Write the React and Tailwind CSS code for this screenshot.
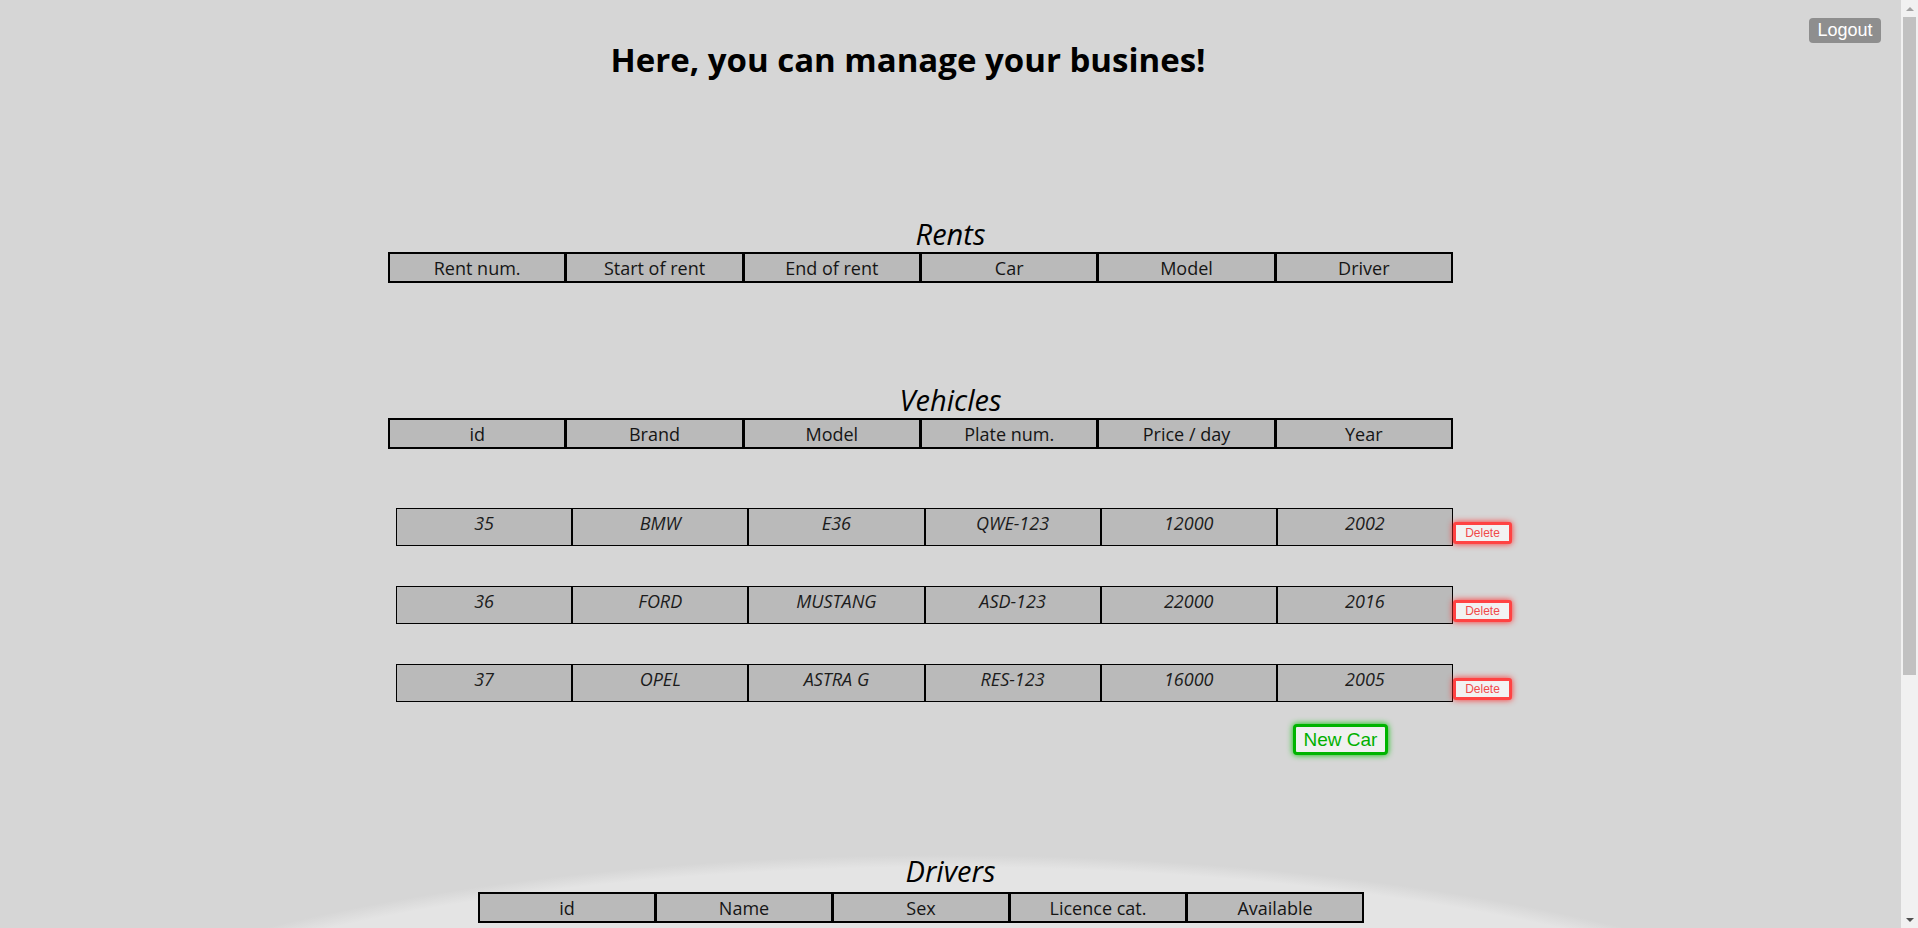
import React from "react";

const FONT = { fontFamily: '"Open Sans", "Noto Sans", sans-serif' };

function HeaderTable({ cols, ml, width }) {
  return (
    <div
      className={`grid bg-black p-[2px] gap-[3px] ${ml} ${width}`}
      style={{ gridTemplateColumns: `repeat(${cols.length}, minmax(0, 1fr))` }}
    >
      {cols.map((c) => (
        <div
          key={c}
          className="bg-[#bababa] h-[27px] leading-[28px] text-center text-[18px] text-[#151515]"
        >
          {c}
        </div>
      ))}
    </div>
  );
}

function Caption({ children, mt }) {
  return (
    <div className={`w-full text-center italic text-[29px] leading-[34px] text-black ${mt}`}>
      {children}
    </div>
  );
}

function DataRow({ values, mt }) {
  return (
    <div className={`flex items-end ml-[396px] ${mt}`}>
      <div className="grid grid-cols-6 w-[1057px] bg-black p-[1px] gap-[2px]">
        {values.map((v, i) => (
          <div
            key={i}
            className="bg-[#bababa] h-[36px] leading-[28px] text-center italic text-[18px] text-[#1c1c1c]"
          >
            {v}
          </div>
        ))}
      </div>
      <button
        className="mb-[2px] w-[59px] h-[22px] rounded-[3px] border-[3px] border-[#ff4343] bg-[#f2f2f2] text-[12px] leading-[14px] text-[#f04a4a] shadow-[0_0_6px_#ff3030]"
        style={{ fontFamily: '"Liberation Sans", Arial, sans-serif' }}
      >
        Delete
      </button>
    </div>
  );
}

export default function App() {
  return (
    <div className="flex h-[928px] w-[1918px] overflow-hidden" style={FONT}>
      <div className="relative w-[1901px] h-[928px] flex flex-col bg-[#d2d2d2] bg-[radial-gradient(1040px_300px_at_945px_1155px,#e4e4e4_96%,#d6d6d6_100%)]">
        <button
          className="absolute right-[20px] top-[18px] w-[72px] h-[25px] rounded-[4px] bg-[#8e8e8e] text-white text-[18px] leading-[25px]"
          style={{ fontFamily: '"Liberation Sans", Arial, sans-serif' }}
        >
          Logout
        </button>

        <div className="w-[1816px] pt-[41px] text-center">
          <h1 className="text-[33px] leading-[38px] font-bold text-black">
            Here, you can manage your busines!
          </h1>
        </div>

        <Caption mt="mt-[138px]">Rents</Caption>
        <div className="mt-[1px]">
          <HeaderTable
            cols={["Rent num.", "Start of rent", "End of rent", "Car", "Model", "Driver"]}
            ml="ml-[388px]"
            width="w-[1065px]"
          />
        </div>

        <Caption mt="mt-[100px]">Vehicles</Caption>
        <div className="mt-[1px]">
          <HeaderTable
            cols={["id", "Brand", "Model", "Plate num.", "Price / day", "Year"]}
            ml="ml-[388px]"
            width="w-[1065px]"
          />
        </div>

        <DataRow mt="mt-[59px]" values={["35", "BMW", "E36", "QWE-123", "12000", "2002"]} />
        <DataRow mt="mt-[40px]" values={["36", "FORD", "MUSTANG", "ASD-123", "22000", "2016"]} />
        <DataRow mt="mt-[40px]" values={["37", "OPEL", "ASTRA G", "RES-123", "16000", "2005"]} />

        <div className="mt-[22px] ml-[1293px]">
          <button
            className="w-[95px] h-[31px] rounded-[4px] border-[3px] border-[#00b400] bg-[#f0f0f0] text-[19px] leading-[22px] text-[#00b000] shadow-[0_0_6px_#00c000]"
            style={{ fontFamily: '"Liberation Sans", Arial, sans-serif' }}
          >
            New Car
          </button>
        </div>

        <Caption mt="mt-[99px]">Drivers</Caption>
        <div className="mt-[4px]">
          <HeaderTable
            cols={["id", "Name", "Sex", "Licence cat.", "Available"]}
            ml="ml-[478px]"
            width="w-[886px]"
          />
        </div>
      </div>

      <div className="w-[17px] h-[928px] bg-[#f1f1f1] flex flex-col items-center">
        <div className="h-[17px] w-full flex items-center justify-center">
          <div className="w-0 h-0 border-l-[4px] border-r-[4px] border-b-[4px] border-l-transparent border-r-transparent border-b-[#a3a3a3]" />
        </div>
        <div className="w-[13px] h-[658px] bg-[#c1c1c1]" />
        <div className="flex-1" />
        <div className="h-[17px] w-full flex items-center justify-center">
          <div className="w-0 h-0 border-l-[4px] border-r-[4px] border-t-[4px] border-l-transparent border-r-transparent border-t-[#505050]" />
        </div>
      </div>
    </div>
  );
}
